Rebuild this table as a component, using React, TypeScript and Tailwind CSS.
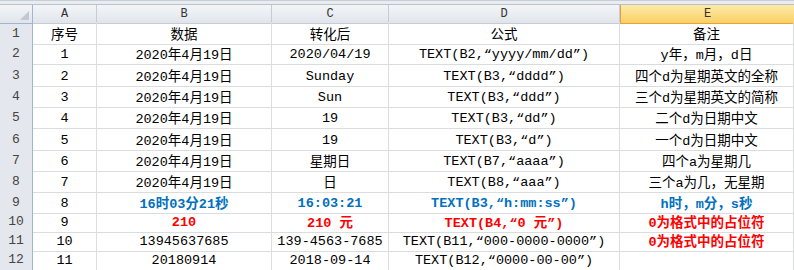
import React from "react";

type Row = {
  n: number;
  h: string;
  cells: string[];
  tone?: (string | null)[];
};

const BLUE = "font-bold text-[#0070c0]";
const RED = "font-bold text-[#ff0000]";

const rows: Row[] = [
  { n: 1, h: "h-[20px]", cells: ["序号", "数据", "转化后", "公式", "备注"] },
  { n: 2, h: "h-[22px]", cells: ["1", "2020年4月19日", "2020/04/19", "TEXT(B2,“yyyy/mm/dd”)", "y年，m月，d日"] },
  { n: 3, h: "h-[21px]", cells: ["2", "2020年4月19日", "Sunday", "TEXT(B3,“dddd”)", "四个d为星期英文的全称"] },
  { n: 4, h: "h-[21px]", cells: ["3", "2020年4月19日", "Sun", "TEXT(B3,“ddd”)", "三个d为星期英文的简称"] },
  { n: 5, h: "h-[22px]", cells: ["4", "2020年4月19日", "19", "TEXT(B3,“dd”)", "二个d为日期中文"] },
  { n: 6, h: "h-[21px]", cells: ["5", "2020年4月19日", "19", "TEXT(B3,“d”)", "一个d为日期中文"] },
  { n: 7, h: "h-[21px]", cells: ["6", "2020年4月19日", "星期日", "TEXT(B7,“aaaa”)", "四个a为星期几"] },
  { n: 8, h: "h-[21px]", cells: ["7", "2020年4月19日", "日", "TEXT(B8,“aaa”)", "三个a为几，无星期"] },
  {
    n: 9,
    h: "h-[19px]",
    cells: ["8", "16时03分21秒", "16:03:21", "TEXT(B3,“h:mm:ss”)", "h时，m分，s秒"],
    tone: [null, BLUE, BLUE, BLUE, BLUE],
  },
  {
    n: 10,
    h: "h-[19px]",
    cells: ["9", "210", "210 元", "TEXT(B4,“0 元”)", "0为格式中的占位符"],
    tone: [null, RED, RED, RED, RED],
  },
  {
    n: 11,
    h: "h-[19px]",
    cells: ["10", "13945637685", "139-4563-7685", "TEXT(B11,“000-0000-0000”)", "0为格式中的占位符"],
    tone: [null, null, null, null, RED],
  },
  { n: 12, h: "h-[19px]", cells: ["11", "20180914", "2018-09-14", "TEXT(B12,“0000-00-00”)", ""] },
];

const cols = ["A", "B", "C", "D", "E"];
const grid = "grid grid-cols-[33px_64px_175px_117px_231px_174px]";

// CJK runs get their own face and size, latin stays on the narrow mono
function Txt({ s }: { s: string }) {
  const parts = s.split(/([\u2E80-\u9FFF\u3000-\u303F\uFF00-\uFFEF]+)/);
  return (
    <span className="leading-none">
      {parts.map((p, i) =>
        i % 2 === 1 ? (
          <span key={i} className="font-['Noto_Sans_CJK_SC'] text-[13.5px]">
            {p}
          </span>
        ) : (
          <span key={i} className="text-[13.5px]">{p}</span>
        )
      )}
    </span>
  );
}

export default function App() {
  return (
    <div className="w-[794px] h-[270px] overflow-hidden bg-white font-['Liberation_Mono','Noto_Sans_CJK_SC',monospace] text-[13px] text-black">
      <div className="h-[5px] bg-[#e9ecf0] border-t border-t-[#c9ced6] border-b border-b-[#b9c1cc]" />

      {/* column headers */}
      <div className={`${grid} h-[17px]`}>
        <div className="relative bg-gradient-to-b from-[#f3f5f8] to-[#e1e5eb] border-r border-b border-[#9eb6ce]">
          <svg className="absolute right-[3px] bottom-[3px]" width="9" height="9" viewBox="0 0 9 9">
            <polygon points="9,0 9,9 0,9" fill="#c3c8d0" />
          </svg>
        </div>
        {cols.map((c) =>
          c === "E" ? (
            <div
              key={c}
              className="flex items-center justify-center bg-gradient-to-b from-[#fdeaa8] to-[#f9d063] border-l border-b border-[#e3a23c] text-[12px] text-[#333]"
            >
              {c}
            </div>
          ) : (
            <div
              key={c}
              className="flex items-center justify-center bg-gradient-to-b from-[#f3f5f8] to-[#e1e5eb] border-r border-b border-[#c5ccd6] text-[12px] text-[#333]"
            >
              {c}
            </div>
          )
        )}
      </div>

      {rows.map((r) => (
        <div key={r.n} className={`${grid} ${r.h}`}>
          <div className="flex items-center justify-center pt-[2px] bg-[#e4e8ee] border-r border-r-[#9eb6ce] border-b border-b-[#c5ccd6] text-[13px] text-[#444]">
            {r.n}
          </div>
          {r.cells.map((t, i) => (
            <div
              key={i}
              className={`flex items-center justify-center pt-[3px] whitespace-pre border-r border-b border-[#dadcdd] ${
                r.tone?.[i] ?? ""
              }`}
            >
              <Txt s={t} />
            </div>
          ))}
        </div>
      ))}

      <div className={`${grid} h-[10px]`}>
        <div className="bg-[#e4e8ee] border-r border-[#9eb6ce]" />
        {cols.map((c) => (
          <div key={c} className="border-r border-[#dadcdd]" />
        ))}
      </div>
    </div>
  );
}
